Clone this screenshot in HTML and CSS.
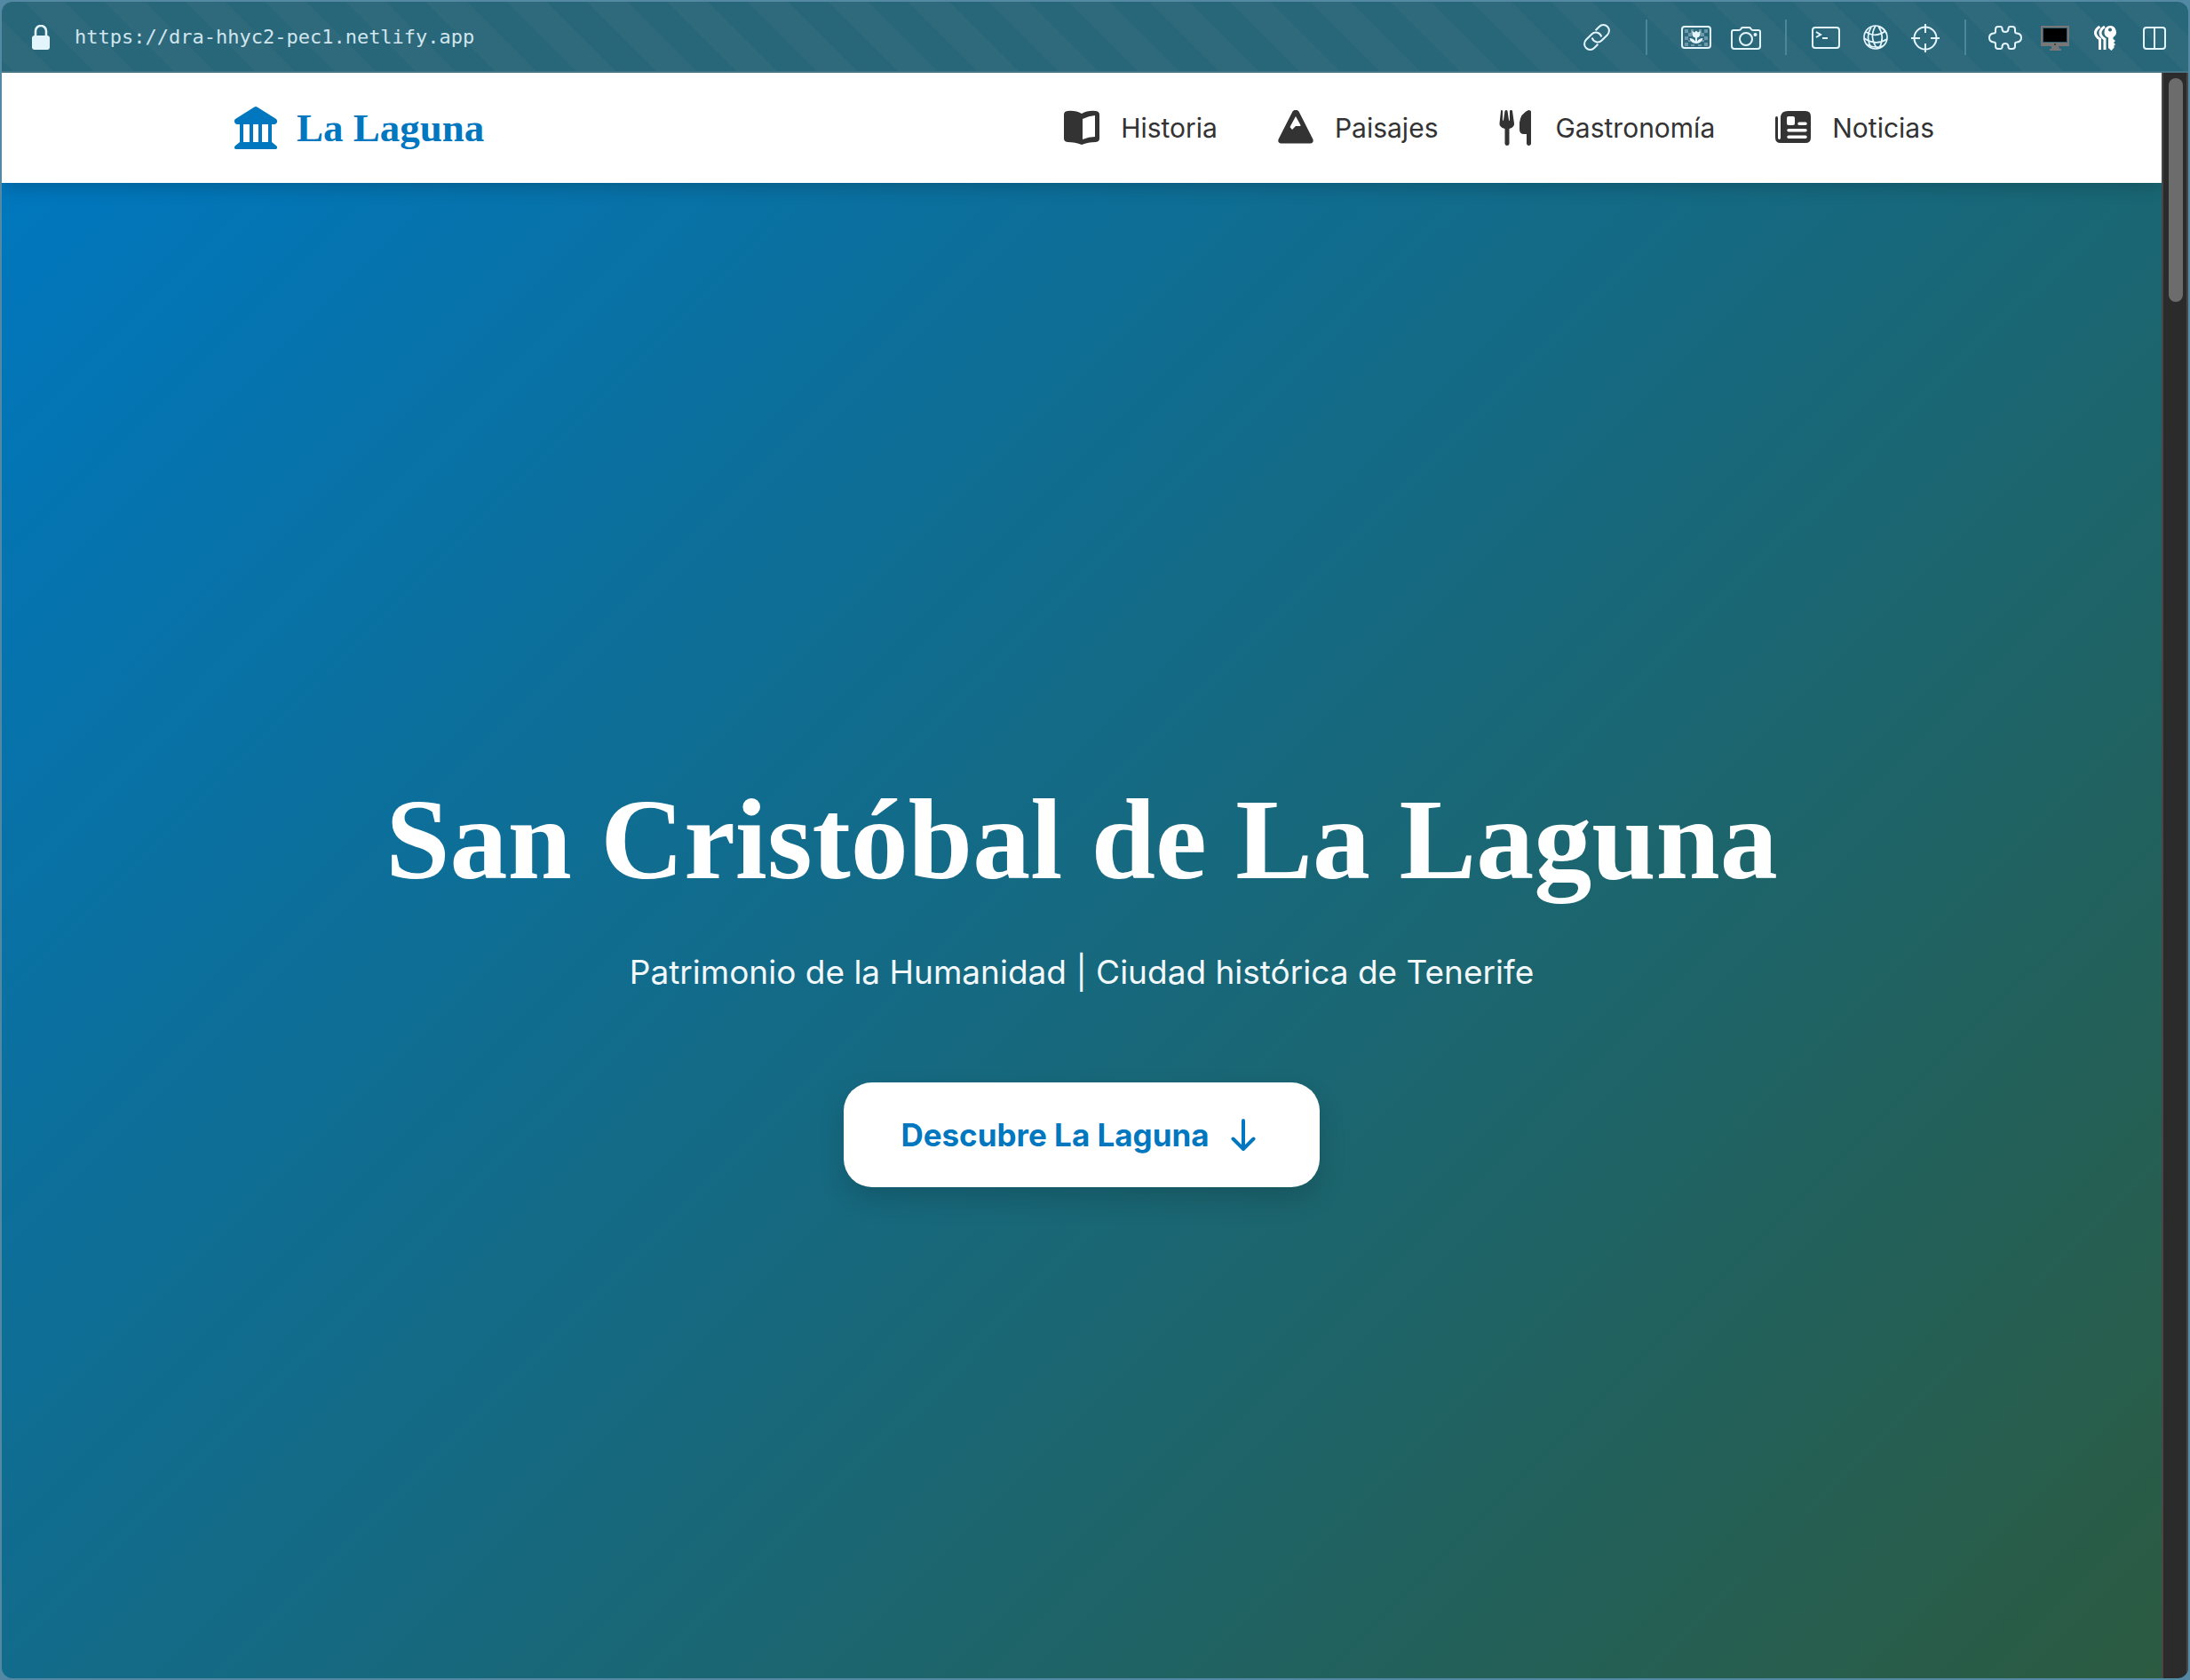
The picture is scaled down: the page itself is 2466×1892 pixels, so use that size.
FILE: index.html
```html
<!DOCTYPE html>
<html lang="es">
<head>
<meta charset="utf-8">
<meta name="viewport" content="width=device-width, initial-scale=1">
<title>La Laguna</title>
<link rel="stylesheet" href="styles.css">
</head>
<body>
<div class="window">
  <div class="toolbar">
    <svg class="lock" viewBox="0 0 20 28" aria-hidden="true"><rect y="12" width="20" height="16" rx="3" fill="currentColor"/><path d="M4 13V7a6 6 0 0 1 12 0v6" fill="none" stroke="currentColor" stroke-width="2.6"/></svg>
    <span class="address">https://dra-hhyc2-pec1.netlify.app</span>
    <div class="tools">
      <button class="tool" aria-label="Copiar enlace"><svg viewBox="0 0 40 40"><g transform="rotate(-45 20 20)"><path d="M15.500 26.500H9.500a6.500 6.500 0 0 1 0-13h9a6.500 6.500 0 0 1 5.600 9.800"/><path d="M24.500 13.500h6a6.500 6.500 0 0 1 0 13h-9a6.500 6.500 0 0 1-5.600-9.800"/></g></svg></button>
      <span class="divider wide"></span>
      <button class="tool" aria-label="Imágenes"><svg viewBox="0 0 40 40"><path fill="currentColor" stroke="none" opacity=".35" d="M7 11h4v4H7zM14 11h3v4h-3zM23 11h3v4h-3zM29 11h4v4h-4zM11 15h4v4h-4zM25 15h4v4h-4zM7 19h4v4H7zM29 19h4v4h-4zM11 23h3v2h-3zM26 23h3v2h-3zM7 26h4v4H7zM14 28h4v2h-4zM22 28h4v2h-4zM29 26h4v4h-4z"/><rect x="4" y="8" width="32" height="24" rx="3"/><path fill="currentColor" stroke="none" d="M15.500 13l2.500 1.500 2-2 2 2 2.500-1.500v4a4.500 4 0 0 1-3.500 3.500v4q2-3.500 6.500-3.500-1 5.500-7.500 6-6.500-.5-7.500-6 4.500 0 6.500 3.500v-4a4.500 4 0 0 1-3.500-3.500z"/></svg></button>
      <button class="tool" aria-label="Captura"><svg viewBox="0 0 40 40"><path d="M6 12h6q1.500 0 2.500-1.500L15 9.500Q15.500 9 16.500 9h7q1 0 1.500.5l.5 1Q26.500 12 28 12h6q2 0 2 2v16q0 3-3 3H7q-3 0-3-3V14q0-2 2-2z"/><circle cx="20" cy="22" r="7"/><circle cx="30.500" cy="17" r="1" fill="currentColor"/></svg></button>
      <span class="divider"></span>
      <button class="tool" aria-label="Consola"><svg viewBox="0 0 40 40"><rect x="5" y="9" width="30" height="23" rx="3"/><path d="M9 14l5 3-5 3M16 21h6"/></svg></button>
      <button class="tool" aria-label="Red"><svg class="fine" viewBox="0 0 40 40"><circle cx="20" cy="20" r="13"/><path d="M15 8.500Q8 20 15 31.500M20 7q-8 13 2 26M23 7.500q8 12 1 25M9 14q11 7 22-1M7 21q13 9 26 1M10 28q9 5 18 2M23 7.500q7 3 9 8"/></svg></button>
      <button class="tool" aria-label="Inspeccionar"><svg viewBox="0 0 40 40"><circle cx="20" cy="21" r="12.500"/><path d="M20 5v10M20 27v10M4 21h10M26 21h10"/></svg></button>
      <span class="divider"></span>
      <button class="tool" aria-label="Extensiones"><svg viewBox="0 0 40 40"><path d="M9 13.500V11q0-3 3-3h2.500q1.500 0 2 1.500v1.500q.5 3 3.500 3t3.500-3V9.500q.5-1.500 2-1.500H28q3 0 3 3v2.500q0 2 2 2 5 .5 5 5t-5 5q-2 0-2 2V30q0 3-3 3h-2.500q-1.500 0-2-1.500V30q-.5-3-3.500-3t-3.500 3v1.500q-.5 1.500-2 1.500H12q-3 0-3-3v-2.500q0-2-2-2-5-.5-5-5t5-5q2 0 2-2z"/></svg></button>
      <button class="tool" aria-label="Pantalla"><svg class="solid" viewBox="0 0 40 40"><path fill="#777" d="M4 7h32v23H4zM16 30h8l1 3h2v2H14v-2h2z"/><path fill="#315f70" d="M6 9h28v17H6z"/><path d="M7 10h26v15H7z" fill="#000"/><circle cx="20" cy="28" r="1" fill="#333"/></svg></button>
      <button class="tool" aria-label="Contraseñas"><svg class="solid" viewBox="0 0 40 40"><path fill-rule="evenodd" d="M26 7a7 7 0 0 1 3.500 13v2l2.500 2-2 2 2 2-2 2 1 1-3.500 4-3.500-3V20.500A7 7 0 0 1 26 7zm0 2.500a2 2 0 1 0 0 4 2 2 0 0 0 0-4z"/><path d="M14.500 8q-5 3-5 7t5 7V34M20 8q-5 3-5 7t5 7V34" fill="none" stroke="#fff" stroke-width="3"/></svg></button>
      <button class="tool" aria-label="Dividir vista"><svg viewBox="0 0 40 40"><rect x="8" y="9" width="24" height="24" rx="3"/><path d="M20 9v24"/></svg></button>
    </div>
  </div>
  <div class="viewport">
    <div class="page">
      <header class="header">
        <div class="container">
          <a class="brand" href="#inicio"><svg viewBox="0 0 60 60" aria-hidden="true"><path d="M28.500 6.500q1.500-1 3 0L53 20q2 2.500.5 4.500-1 1.500-3 1.500h-41q-2 0-3-1.500Q5 22 7 20z"/><path d="M12 24h4v23h-4zM23 24h4v23h-4zM33 24h4v23h-4zM44 24h4v23h-4z"/><path d="M12 46h36l5 4q2 2 .5 3.500-.5.5-2 .5h-43q-1.500 0-2-.5-1.500-1.500.5-3.500z"/></svg>La Laguna</a>
          <nav class="nav">
            <a href="#historia"><svg viewBox="0 0 40 40" aria-hidden="true"><path fill-rule="evenodd" d="M4 1q9-1 16 3 7-4 16-3 4 .5 4 4v27q0 3.500-4 4-9 0-16 3-7-3-16-3-4-.5-4-4V5q0-3.500 4-4zm17 9v23q7-3 14-3V6q-7 .5-14 4z"/></svg>Historia</a>
            <a href="#paisajes"><svg viewBox="0 0 40 40" aria-hidden="true"><path fill-rule="evenodd" d="M16.500 1.500q3.500-3.500 7 0L39.500 33q1 4-3 4.500h-33q-4-.5-3-4.500zM20 7l-6.500 12 2.500 3 4-4h5q1-.5 0-2z"/></svg>Paisajes</a>
            <a href="#gastronomia"><svg viewBox="0 0 40 40" aria-hidden="true"><path d="M4 0q1 0 1 1v10q.5 2 1 0L7.500 1q.5-1 1.500-1t1.500 1L12 11q.5 2 1 0V1q0-1 1.500-1T16 1l2 14q.5 4-5.500 6v17q-.5 2-2.500 2t-2.500-2V21Q1 19 1.500 15L3 1q0-1 1-1zM34 0q3 0 3 2v36q-.5 2-2.500 2T32 38V27h-3q-5 0-5-5v-8Q25 4 34 0z"/></svg>Gastronomía</a>
            <a href="#noticias"><svg viewBox="0 0 40 40" aria-hidden="true"><path fill-rule="evenodd" d="M14 1h20q6 0 6 6v24q0 6-6 6H6q-6 0-6-6V9q0-2 1.500-2T3 9v22q0 2 1.500 2T6 31V7q1-6 8-6zm1 6q-2 0-2 2v6q0 2 2 2h5q2 0 2-2V9q0-2-2-2zm12 6.500h7a1.500 1.500 0 0 1 0 3.500h-7a1.500 1.500 0 0 1 0-3.500zM15 21h19a1.500 1.500 0 0 1 0 3.500H15a1.500 1.500 0 0 1 0-3.500zm0 7.500h19a1.500 1.500 0 0 1 0 3.500H15a1.500 1.500 0 0 1 0-3.500z"/></svg>Noticias</a>
          </nav>
        </div>
      </header>
      <main class="hero" id="inicio">
        <h1>San Cristóbal de La Laguna</h1>
        <p>Patrimonio de la Humanidad | Ciudad histórica de Tenerife</p>
        <a class="cta" href="#historia">Descubre La Laguna<svg viewBox="0 0 44 44" aria-hidden="true"><path d="M22 6v31M10.500 26.500L22 38l11.500-11.500" fill="none" stroke="currentColor" stroke-width="4" stroke-linecap="round" stroke-linejoin="round"/></svg></a>
      </main>
    </div>
    <div class="scrollbar"><div class="thumb"></div></div>
  </div>
</div>
</body>
</html>
```
FILE: styles.css
```css
* { box-sizing: border-box; }

body {
  margin: 0;
  background: #5489a4;
  font-family: Inter, "Liberation Sans", sans-serif;
}

.window {
  display: flex;
  flex-direction: column;
  height: 100vh;
  border: 2px solid #5489a4;
  border-radius: 14px;
  overflow: hidden;
}

.toolbar {
  display: flex;
  align-items: center;
  flex: none;
  height: 80px;
  padding: 2px 10px 0 34px;
  border-bottom: 2px solid #457687;
  background: repeating-linear-gradient(45deg, #286679 0 9px, #2e697c 9px 41px, #286679 41px 64px);
  color: #e4f4fb;
}

.lock { width: 20px; height: 28px; }

.address {
  margin-left: 28px;
  font: 22px/32px "DejaVu Sans Mono", monospace;
  color: #d0e5ed;
}

.tools { display: flex; align-items: center; margin-left: auto; }

.tool {
  width: 56px;
  height: 56px;
  padding: 8px;
  border: 0;
  background: none;
  color: inherit;
}

.tool svg {
  display: block;
  width: 40px;
  height: 40px;
  fill: none;
  stroke: #e4f6ff;
  stroke-width: 2;
}

.tool svg.solid { fill: #fff; stroke: none; }
.tool svg.fine { stroke-width: 1.7; }

.divider { width: 2px; height: 40px; margin: 0 16px; background: #4b8799; }
.divider.wide { margin: 0 27px; }

.viewport { display: flex; flex: 1; min-height: 0; }

.page { flex: 1; min-width: 0; overflow: hidden; }

.header {
  position: relative;
  padding: 32px 48px;
  background: #fff;
  box-shadow: 0 4px 20px rgba(0, 0, 0, .2);
}

.container {
  display: flex;
  align-items: center;
  justify-content: space-between;
  max-width: 1920px;
  margin: 0 auto;
}

.brand {
  display: flex;
  align-items: center;
  gap: 16px;
  color: #0077be;
  font: bold 45px/60px "Liberation Serif", serif;
  text-decoration: none;
}

.brand svg { width: 60px; height: 60px; fill: currentColor; }

.nav { display: flex; gap: 68px; }

.nav a {
  display: flex;
  align-items: center;
  gap: 24px;
  color: #333;
  font-size: 30px;
  line-height: 40px;
  text-decoration: none;
}

.nav svg { width: 40px; height: 40px; fill: currentColor; }

.hero {
  display: flex;
  flex-direction: column;
  align-items: center;
  justify-content: center;
  min-height: calc(100vh - 84px);
  padding: 32px 48px 48px;
  background: linear-gradient(135deg, #0077be, #2d5a3d);
  color: #fff;
  text-align: center;
}

h1 {
  margin: 0;
  font: bold 130px/156px "Liberation Serif", serif;
}

.hero p {
  margin: 40px 0 92px;
  color: #f3f8fb;
  font-size: 37px;
  line-height: 64px;
}

.cta {
  display: flex;
  align-items: center;
  gap: 16px;
  padding: 36px 64px;
  border-radius: 32px;
  background: #fff;
  box-shadow: 0 14px 30px rgba(0, 0, 0, .15);
  color: #0077be;
  font-size: 35px;
  font-weight: 700;
  line-height: 46px;
  text-decoration: none;
}

.cta svg { width: 44px; height: 44px; }

.scrollbar {
  flex: none;
  width: 30px;
  padding: 6px 4px 0 6px;
  border-left: 2px solid #474747;
  border-right: 2px solid #474747;
  background: #2b2b2b;
}

.thumb { width: 16px; height: 252px; border-radius: 8px; background: #6c6c6c; }
```
